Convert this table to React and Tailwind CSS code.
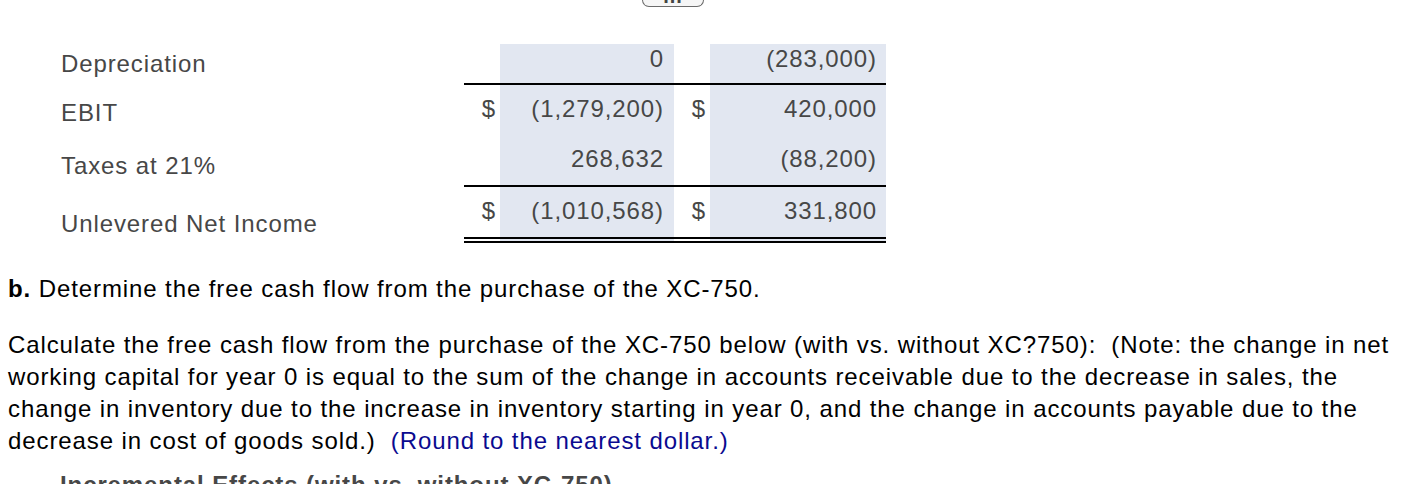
import React from "react";

const shade = "bg-[#e2e7f1]";

function Row({ label, labelPt, h, vals, valPt, top, bottom }) {
  const bt = top ? "border-t-2 border-black" : "";
  const bb = bottom ? "border-b-[6px] border-double border-black" : "";
  const cell = `${h} ${bt} ${bb}`;
  return (
    <>
      <div className={`${h} ${labelPt} pl-[61px] text-[#474747]`}>{label}</div>
      <div className={`${cell} ${valPt} text-right pr-[4px] text-[#474747]`}>{vals[0]}</div>
      <div className={`${cell} ${valPt} ${shade} text-right pr-[10px] text-[#474747]`}>{vals[1]}</div>
      <div className={`${cell} ${valPt} text-right pr-[4px] text-[#474747]`}>{vals[2]}</div>
      <div className={`${cell} ${valPt} ${shade} text-right pr-[9px] text-[#474747]`}>{vals[3]}</div>
    </>
  );
}

export default function App() {
  return (
    <div className="w-[1412px] h-[484px] overflow-hidden bg-white font-['Liberation_Sans',Arial,sans-serif] text-[24px] tracking-[0.9px] leading-[28px]">
      <div className="ml-[642px] w-[62px] h-[7px] border border-t-0 border-[#6b6b6b] rounded-b-[7px] bg-[#f6f6f6] overflow-hidden">
        <div className="-mt-[16px] text-center text-[20px] leading-[24px] font-bold text-[#444]">...</div>
      </div>

      <div className="mt-[37px] grid grid-cols-[464px_36px_174px_36px_176px]">
        <Row
          label="Depreciation"
          labelPt="pt-[6px]"
          h="h-[39px]"
          valPt="pt-[1px]"
          vals={["", "0", "", "(283,000)"]}
        />
        <Row
          label="EBIT"
          labelPt="pt-[16px]"
          h="h-[52px]"
          valPt="pt-[10px]"
          top
          vals={["$", "(1,279,200)", "$", "420,000"]}
        />
        <Row
          label="Taxes at 21%"
          labelPt="pt-[17px]"
          h="h-[50px]"
          valPt="pt-[10px]"
          vals={["", "268,632", "", "(88,200)"]}
        />
        <Row
          label="Unlevered Net Income"
          labelPt="pt-[25px]"
          h="h-[58px]"
          valPt="pt-[10px]"
          top
          bottom
          vals={["$", "(1,010,568)", "$", "331,800"]}
        />
      </div>

      <div className="mt-[30px] pl-[8px] leading-[32px] text-black">
        <div className="whitespace-pre">
          <span className="font-bold">b.</span> Determine the free cash flow from the purchase of the XC-750.
        </div>
        <div className="mt-[24px]">
          <div className="whitespace-pre">Calculate the free cash flow from the purchase of the XC-750 below (with vs. without XC?750):  (Note: the change in net</div>
          <div className="whitespace-pre">working capital for year 0 is equal to the sum of the change in accounts receivable due to the decrease in sales, the</div>
          <div className="whitespace-pre">change in inventory due to the increase in inventory starting in year 0, and the change in accounts payable due to the</div>
          <div className="whitespace-pre">
            decrease in cost of goods sold.)  <span className="text-[#0a0a90]">(Round to the nearest dollar.)</span>
          </div>
        </div>
      </div>

      <div className="mt-[12px] pl-[60px] leading-[32px] font-bold text-[#474747] whitespace-pre">
        Incremental Effects (with vs. without XC-750)
      </div>
    </div>
  );
}
